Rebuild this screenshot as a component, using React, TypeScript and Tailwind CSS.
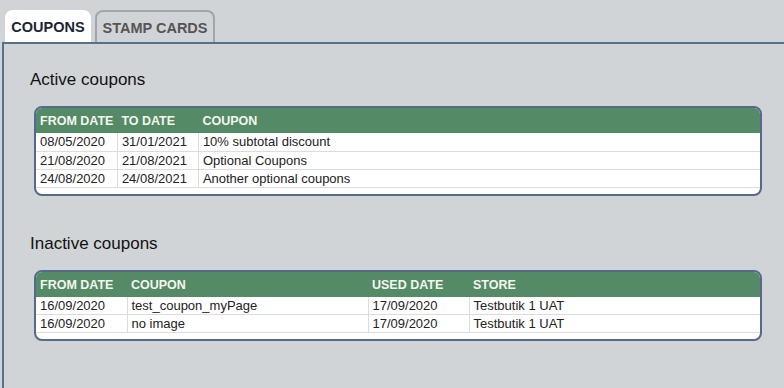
const active = [
  { from: '08/05/2020', to: '31/01/2021', coupon: '10% subtotal discount' },
  { from: '21/08/2020', to: '21/08/2021', coupon: 'Optional Coupons' },
  { from: '24/08/2020', to: '24/08/2021', coupon: 'Another optional coupons' },
];

const inactive = [
  { from: '16/09/2020', coupon: 'test_coupon_myPage', used: '17/09/2020', store: 'Testbutik 1 UAT' },
  { from: '16/09/2020', coupon: 'no image', used: '17/09/2020', store: 'Testbutik 1 UAT' },
];

function Th({ children, w }: { children: React.ReactNode; w?: string }) {
  return (
    <th className={`${w ?? ''} h-[25px] whitespace-nowrap px-[4px] pt-[2px] text-left align-middle text-[12.5px] font-bold uppercase text-[#f3f6ee]`}>
      {children}
    </th>
  );
}

function Td({ children, last }: { children: React.ReactNode; last?: boolean }) {
  return (
    <td className={`h-[18px] whitespace-nowrap px-[4px] py-0 text-[13px] leading-[17px] text-[#222] border-b border-[#dcdcdc] ${last ? '' : 'border-r'}`}>
      {children}
    </td>
  );
}

export default function App() {
  return (
    <div className="h-[388px] w-[784px] overflow-hidden bg-[#d1d4d7] font-['Liberation_Sans',Arial,sans-serif]">
      <div className="flex items-end gap-[4px] pl-[5px] pt-[10px]">
        <div className="flex h-[32px] w-[86px] items-center justify-center rounded-t-[8px] bg-white pt-[3px] text-[14.5px] font-bold text-[#1b2533]">
          COUPONS
        </div>
        <div className="flex h-[32px] w-[120px] items-center justify-center rounded-t-[8px] border-2 border-b-0 border-[#a3a5a8] bg-[#d1d4d7] pt-[3px] text-[14.5px] font-bold text-[#555]">
          STAMP CARDS
        </div>
      </div>
      <div className="ml-[2px] border-l-2 border-t-2 border-[#56708a] pb-[60px] pl-[26px] pr-[22px] pt-[26px]">
        <h2 className="text-[17px] leading-[20px] text-[#111]">Active coupons</h2>
        <div className="ml-[4px] mt-[16px] overflow-hidden rounded-[8px] border-2 border-[#55698a] bg-white pb-[6px]">
          <table className="w-full border-collapse">
            <thead className="bg-[#558a66]">
              <tr>
                <Th w="w-[81px]">From date</Th>
                <Th w="w-[81px]">To date</Th>
                <Th>Coupon</Th>
              </tr>
            </thead>
            <tbody>
              {active.map((r, i) => (
                <tr key={i}>
                  <Td>{r.from}</Td>
                  <Td>{r.to}</Td>
                  <Td last>{r.coupon}</Td>
                </tr>
              ))}
            </tbody>
          </table>
        </div>

        <h2 className="mt-[38px] text-[17px] leading-[20px] text-[#111]">Inactive coupons</h2>
        <div className="ml-[4px] mt-[16px] overflow-hidden rounded-[8px] border-2 border-[#55698a] bg-white pb-[6px]">
          <table className="w-full border-collapse">
            <thead className="bg-[#558a66]">
              <tr>
                <Th w="w-[91px]">From date</Th>
                <Th w="w-[241px]">Coupon</Th>
                <Th w="w-[101px]">Used date</Th>
                <Th>Store</Th>
              </tr>
            </thead>
            <tbody>
              {inactive.map((r, i) => (
                <tr key={i}>
                  <Td>{r.from}</Td>
                  <Td>{r.coupon}</Td>
                  <Td>{r.used}</Td>
                  <Td last>{r.store}</Td>
                </tr>
              ))}
            </tbody>
          </table>
        </div>
      </div>
    </div>
  );
}
